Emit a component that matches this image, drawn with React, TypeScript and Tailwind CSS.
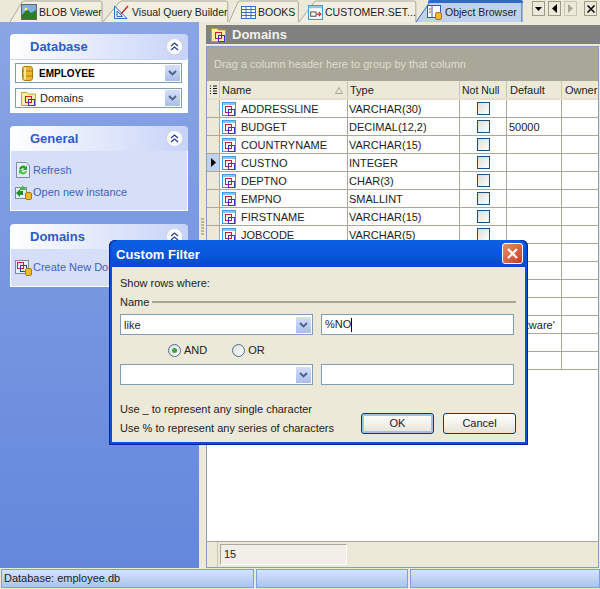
import type { ReactNode } from 'react';

const font = "[font-family:'Liberation_Sans',Tahoma,sans-serif]";

// rows 8 and up sit behind the dialog, only the tail of the default value shows
const domains = [
  ['ADDRESSLINE', 'VARCHAR(30)', ''],
  ['BUDGET', 'DECIMAL(12,2)', '50000'],
  ['COUNTRYNAME', 'VARCHAR(15)', ''],
  ['CUSTNO', 'INTEGER', ''],
  ['DEPTNO', 'CHAR(3)', ''],
  ['EMPNO', 'SMALLINT', ''],
  ['FIRSTNAME', 'VARCHAR(15)', ''],
  ['JOBCODE', 'VARCHAR(5)', ''],
  ['', '', ''],
  ['', '', ''],
  ['', '', ''],
  ['', '', ''],
  ['', '', "'software'"],
  ['', '', ''],
  ['', '', ''],
];

function Squares({ x = 0, y = 0 }: { x?: number; y?: number }) {
  return (
    <g transform={`translate(${x} ${y})`} fill="none" strokeWidth="1">
      <rect x="0.5" y="0.5" width="6" height="6" stroke="#c8203c" />
      <rect x="3.5" y="3.5" width="6" height="6" stroke="#3a35c8" />
    </g>
  );
}

function DomainIcon() {
  return (
    <svg width="14" height="14" viewBox="0 0 14 14" className="shrink-0">
      <rect x="0.5" y="0.5" width="13" height="13" fill="#fff" stroke="#3f9be0" />
      <rect x="1" y="1" width="12" height="2" fill="#8cc6ef" />
      <Squares x={3} y={4} />
    </svg>
  );
}

function FolderIcon() {
  return (
    <svg width="16" height="15" viewBox="0 0 16 15" className="shrink-0">
      <path d="M0.5 3.5V1.5H6L7.5 3H14.5V14.5H0.5Z" fill="#fbeea6" stroke="#c9a227" />
      <Squares x={4} y={5} />
    </svg>
  );
}

function DbIcon() {
  return (
    <svg width="11" height="15" viewBox="0 0 11 15" className="shrink-0">
      <rect x="0.5" y="0.5" width="10" height="14" rx="2.5" fill="#eeb92e" stroke="#a67c12" />
      <path d="M1 5H10M1 10H10" stroke="#a67c12" />
      <rect x="2" y="1.5" width="2" height="12" fill="#fbe88c" />
    </svg>
  );
}

function Chevrons() {
  return (
    <span className="relative w-[17px] h-[17px] rounded-full bg-white border border-[#c6d2f0] flex items-center justify-center">
      <svg width="9" height="9" viewBox="0 0 9 9" fill="none" stroke="#21409a" strokeWidth="1.3">
        <path d="M1 4L4.5 1L8 4M1 8L4.5 5L8 8" />
      </svg>
    </span>
  );
}

function ComboArrow() {
  return (
    <span className="w-[15px] h-[16px] mr-px bg-gradient-to-b from-[#d5dff8] to-[#a9bdee] flex items-center justify-center">
      <svg width="9" height="6" viewBox="0 0 9 6" fill="none" stroke="#4d6185" strokeWidth="1.8">
        <path d="M1 1L4.5 4.5L8 1" />
      </svg>
    </span>
  );
}

function Combo({ children, className }: { children?: ReactNode; className: string }) {
  return (
    <div className={`bg-white border border-[#7f9db9] flex items-center justify-between ${className}`}>
      <div className="flex items-center min-w-0">{children}</div>
      <ComboArrow />
    </div>
  );
}

function Panel({ title, tall, children }: { title: string; tall?: boolean; children: ReactNode }) {
  return (
    <div className="w-[178px]">
      <div className="h-[25px] rounded-t-[4px] bg-gradient-to-r from-white to-[#c7d3f7] flex items-center justify-between pl-5 pr-[5px]">
        <span className="text-[13px] font-bold text-[#2f5bc8]">{title}</span>
        <Chevrons />
      </div>
      <div className={`border border-t-0 border-white ${tall ? 'bg-white' : 'bg-[#d6dff7]'}`}>{children}</div>
    </div>
  );
}

function TaskIcon({ kind }: { kind: 'refresh' | 'open' | 'create' }) {
  if (kind === 'refresh') {
    return (
      <svg width="14" height="16" viewBox="0 0 14 16">
        <path d="M0.5 0.5H10L13.5 4V15.5H0.5Z" fill="#e8eef8" stroke="#7b8aa5" />
        <path d="M3 7A4 4 0 0 1 10 5L11 3V8H6.5L8.5 7A2.5 2.5 0 0 0 4.5 8Z" fill="#2ca02c" />
        <path d="M11 9A4 4 0 0 1 4 11L3 13V8H7.5L5.5 9.5A2.5 2.5 0 0 0 9.5 9Z" fill="#4fc04f" />
      </svg>
    );
  }
  if (kind === 'open') {
    return (
      <svg width="17" height="16" viewBox="0 0 17 16">
        <rect x="0.5" y="3.5" width="11" height="11" fill="#e8eef8" stroke="#7b8aa5" />
        <path d="M1 9L5 5V7H8V11H5V13Z" fill="#1f8f2c" />
        <path d="M11 5L7 1V3H5V6H11Z" fill="#46b84c" />
        <rect x="10.5" y="8.5" width="6" height="7" rx="1.5" fill="#eeb92e" stroke="#a67c12" />
      </svg>
    );
  }
  return (
    <svg width="17" height="16" viewBox="0 0 17 16">
      <rect x="0.5" y="0.5" width="13" height="13" fill="#e8eef8" stroke="#7b8aa5" />
      <Squares x={2} y={2} />
      <rect x="10.5" y="8.5" width="6" height="7" rx="1.5" fill="#eeb92e" stroke="#a67c12" />
    </svg>
  );
}

function TabShape({ active }: { active?: boolean }) {
  return (
    <svg className="absolute inset-0 w-full h-full" preserveAspectRatio="none" viewBox="0 0 100 22">
      <path
        d="M0 22L13 2Q14 1 16 1H97Q99 1 99 3V22"
        fill={active ? '#c1d2ee' : '#f1efe2'}
        stroke={active ? '#316ac5' : '#aca899'}
        vectorEffect="non-scaling-stroke"
      />
    </svg>
  );
}

function Tab({ label, icon, className, pad, active }: { label: string; icon: ReactNode; className: string; pad: string; active?: boolean }) {
  return (
    <div className={`relative h-[22px] shrink-0 ${className}`}>
      <TabShape active={active} />
      {active && <div className="absolute top-0 left-[12px] right-0 h-[3px] bg-[#316ac5] rounded-t-[2px]" />}
      <div className={`relative h-full flex items-center gap-[2px] pt-[2px] whitespace-nowrap text-[10.5px] ${pad}`}>
        {icon}
        <span className="text-[#222]">{label}</span>
      </div>
    </div>
  );
}

function TabNavButton({ children, dim }: { children: ReactNode; dim?: boolean }) {
  return (
    <div className={`w-[13px] h-[15px] border flex items-center justify-center ${dim ? 'border-[#c8c5b2]' : 'border-[#9d9a88]'}`}>
      {children}
    </div>
  );
}

function TabBar() {
  return (
    <div className="h-[22px] bg-[#ece9d8] flex items-start shrink-0 relative">
      <Tab
        className="w-[93px] ml-[10px]"
        pad="pl-[11px]"
        label="BLOB Viewer"
        icon={
          <svg width="16" height="16" viewBox="0 0 16 16" className="shrink-0">
            <rect x="0.5" y="0.5" width="15" height="15" fill="#7fb0e0" stroke="#666" />
            <path d="M1 11L6 5L10 9L15 6V15H1Z" fill="#2d7a2a" />
            <circle cx="5" cy="5" r="1.5" fill="#fff27a" />
          </svg>
        }
      />
      <Tab
        className="w-[126px]"
        pad="pl-[10px]"
        label="Visual Query Builder"
        icon={
          <svg width="17" height="16" viewBox="0 0 17 16" className="shrink-0" fill="none">
            <path d="M1.5 14.5V2L14 14.5Z" stroke="#2f6bd0" />
            <path d="M4 12.5V7L9.5 12.5Z" stroke="#2f6bd0" />
            <path d="M8 10L15 2" stroke="#c03030" strokeWidth="1.5" />
          </svg>
        }
      />
      <Tab
        className="w-[70px]"
        pad="pl-[12px]"
        label="BOOKS"
        icon={
          <svg width="15" height="13" viewBox="0 0 15 13" className="shrink-0" fill="#fff" stroke="#3b6fc0">
            <rect x="0.5" y="0.5" width="14" height="12" />
            <path d="M0.5 3.5H14.5M0.5 6.5H14.5M0.5 9.5H14.5M5 0.5V12.5M10 0.5V12.5" />
          </svg>
        }
      />
      <Tab
        className="w-[118px]"
        pad="pl-[9px]"
        label="CUSTOMER.SET..."
        icon={
          <svg width="15" height="15" viewBox="0 0 14 14" className="shrink-0">
            <rect x="0.5" y="0.5" width="13" height="13" fill="#fff" stroke="#3f9be0" />
            <rect x="1" y="1" width="12" height="2" fill="#8cc6ef" />
            <rect x="2.5" y="6.5" width="5" height="4" fill="none" stroke="#555" />
            <path d="M8 8.5H12M10 6.5L12 8.5L10 10.5" fill="none" stroke="#d02040" />
          </svg>
        }
      />
      <Tab
        active
        className="w-[107px] -ml-[1px]"
        pad="pl-[11px]"
        label="Object Browser"
        icon={
          <svg width="15" height="15" viewBox="0 0 15 15" className="shrink-0 mr-px">
            <rect x="0.5" y="0.5" width="13" height="12" fill="#fff" stroke="#2f5bc8" />
            <path d="M5 1V12" stroke="#2f5bc8" />
            <path d="M2 4H4M2 7H4" stroke="#c03030" />
            <rect x="8.5" y="7.5" width="6" height="7" rx="1.5" fill="#eeb92e" stroke="#a67c12" />
          </svg>
        }
      />
      <div className="flex items-center ml-[9px] mt-[1px] gap-[3px]">
        <TabNavButton>
          <svg width="7" height="4" viewBox="0 0 7 4"><path d="M0 0H7L3.5 4Z" fill="#000" /></svg>
        </TabNavButton>
        <TabNavButton>
          <svg width="5" height="9" viewBox="0 0 5 9"><path d="M5 0V9L0 4.5Z" fill="#000" /></svg>
        </TabNavButton>
        <TabNavButton dim>
          <svg width="5" height="9" viewBox="0 0 5 9"><path d="M0 0V9L5 4.5Z" fill="#a8a595" /></svg>
        </TabNavButton>
        <div className="ml-[4px]">
          <TabNavButton>
            <svg width="8" height="8" viewBox="0 0 8 8" stroke="#000" strokeWidth="1.5"><path d="M0.5 0.5L7.5 7.5M7.5 0.5L0.5 7.5" /></svg>
          </TabNavButton>
        </div>
      </div>
    </div>
  );
}

function Sidebar() {
  return (
    <div className="w-[199px] shrink-0 bg-gradient-to-b from-[#8aa5e4] to-[#6487dc] pt-3 pl-[10px] flex flex-col gap-[13px]">
      <Panel title="Database" tall>
        <div className="px-[4px] pt-[3px] pb-[4px] flex flex-col gap-[5px] border-t border-[#c7d3f7]">
          <Combo className="w-[167px] h-5">
            <span className="ml-[6px]"><DbIcon /></span>
            <span className="ml-[6px] pt-px font-bold text-[10px] text-black">EMPLOYEE</span>
          </Combo>
          <Combo className="w-[167px] h-5">
            <span className="ml-[5px]"><FolderIcon /></span>
            <span className="ml-[3px] text-[#222]">Domains</span>
          </Combo>
        </div>
      </Panel>
      <Panel title="General">
        <div className="pt-[10px] pb-[9px] pl-[3px] flex flex-col gap-[4px] text-[#3f62c4]">
          <div className="h-[18px] flex items-center gap-px">
            <span className="w-[18px] flex justify-center"><TaskIcon kind="refresh" /></span>
            Refresh
          </div>
          <div className="h-[18px] flex items-center gap-px">
            <span className="w-[18px] flex justify-center"><TaskIcon kind="open" /></span>
            Open new instance
          </div>
        </div>
      </Panel>
      <Panel title="Domains">
        <div className="pl-[3px] text-[#3f62c4] flex items-center gap-px whitespace-nowrap h-[37px]">
          <span className="w-[18px] flex justify-center"><TaskIcon kind="create" /></span>
          Create New Domain
        </div>
      </Panel>
    </div>
  );
}

function Splitter() {
  return (
    <div className="w-[7px] shrink-0 bg-[#ece9d8] flex flex-col items-center">
      <div className="h-[196px]" />
      <div className="flex flex-col gap-px">
        {Array.from({ length: 6 }).map((_, i) => (
          <span key={i} className="w-[3px] h-[2px] bg-[#b9b6a2]" />
        ))}
      </div>
    </div>
  );
}

function HeaderCell({ className, children }: { className: string; children: ReactNode }) {
  return (
    <div className={`h-full flex items-center pt-px border-r border-[#c8c5b2] whitespace-nowrap overflow-hidden ${className}`}>
      {children}
    </div>
  );
}

function Grid() {
  return (
    <div className="flex-1 min-h-0 flex flex-col border border-[#84a0bd] mr-px bg-white">
      <div className="h-[34px] shrink-0 bg-[#a9a797] flex items-center pl-[7px] text-[#dfddd0]">
        Drag a column header here to group by that column
      </div>
      <div className="h-[19px] shrink-0 bg-[#ece9d8] border-b-2 border-[#e2dfcd] flex items-center text-[#222]">
        <div className="w-[13px] h-full flex items-center justify-center border-r border-[#c8c5b2]">
          <svg width="7" height="9" viewBox="0 0 7 9" stroke="#111">
            <path d="M0 1H1M3 1H7M0 3.5H1M3 3.5H7M0 6H1M3 6H7M0 8.5H1M3 8.5H7" />
          </svg>
        </div>
        <HeaderCell className="w-[128px] justify-between pl-[2px] pr-[4px]">
          Name
          <svg width="8" height="7" viewBox="0 0 8 7" fill="none" stroke="#aca899"><path d="M4 0.5L7.5 6.5H0.5Z" /></svg>
        </HeaderCell>
        <HeaderCell className="w-[112px] pl-[2px]">Type</HeaderCell>
        <HeaderCell className="w-[47px] pl-[2px] text-[10.5px]">Not Null</HeaderCell>
        <HeaderCell className="w-[55px] pl-[3px]">Default</HeaderCell>
        <div className="pl-[3px] pt-px">Owner</div>
      </div>
      <div>
        {domains.map(([name, type, def], i) => (
          <div key={i} className="h-[18px] flex border-b border-[#aca899] text-[#222]">
            <div className={`w-[13px] border-r border-[#aca899] flex items-center justify-center ${i === 3 ? 'bg-[#c1d2ee]' : 'bg-[#ece9d8]'}`}>
              {i === 3 && <svg width="5" height="9" viewBox="0 0 5 9"><path d="M0 0V9L5 4.5Z" fill="#000" /></svg>}
            </div>
            <div className="w-[128px] border-r border-[#aca899] flex items-center pl-[2px] gap-[5px] whitespace-nowrap">
              {name && <DomainIcon />}
              <span className="pt-px">{name}</span>
            </div>
            <div className="w-[112px] border-r border-[#aca899] flex items-center pl-px pt-px">{type}</div>
            <div className="w-[47px] border-r border-[#aca899] flex items-center justify-center">
              {name && <span className="w-[13px] h-[13px] border border-[#1c5180] bg-gradient-to-br from-[#dcdcd7] to-white" />}
            </div>
            <div className="w-[55px] border-r border-[#aca899] flex items-center pl-[2px] pt-px">{def}</div>
            <div className="flex-1" />
          </div>
        ))}
      </div>
      <div className="flex-1" />
      <div className="h-[26px] shrink-0 bg-[#ece9d8] border-t border-[#aca899] flex items-center">
        <div className="w-[11px] h-full border-r border-[#c8c5b2]" />
        <div className="ml-[2px] w-[127px] h-[21px] bg-[#f1efe7] border border-[#aca899] border-r-white border-b-white flex items-center pl-[3px] text-[#222]">
          15
        </div>
      </div>
    </div>
  );
}

function ContentPane() {
  return (
    <div className="flex-1 min-w-0 flex flex-col bg-[#ece9d8] pt-[3px]">
      <div className="h-[19px] shrink-0 bg-[#808080] flex items-center pl-[5px] gap-[5px] mb-[2px]">
        <FolderIcon />
        <span className="text-[13px] font-bold text-[#f2f0ea]">Domains</span>
      </div>
      <Grid />
    </div>
  );
}

function StatusBar() {
  const cell = 'h-[19px] border border-[#7d9fe0] bg-gradient-to-b from-[#d5e4fa] to-[#a9c4ee]';
  return (
    <div className="h-[21px] shrink-0 bg-[#ece9d8] pt-[1px] flex gap-[2px] pl-px text-[#222]">
      <div className={`${cell} w-[253px] pl-[2px] flex items-center`}>Database: employee.db</div>
      <div className={`${cell} w-[152px]`} />
      <div className={`${cell} flex-1`} />
    </div>
  );
}

function DialogButton({ label, primary }: { label: string; primary?: boolean }) {
  return (
    <button
      className={`w-[73px] h-[21px] rounded-[3px] border border-[#003c74] bg-gradient-to-b from-white to-[#e6e3d6] text-[#222] ${
        primary ? 'shadow-[inset_0_0_0_2px_#a6bfe8]' : ''
      }`}
    >
      {label}
    </button>
  );
}

function Radio({ label, checked }: { label: string; checked?: boolean }) {
  return (
    <div className="flex items-center gap-[3px]">
      <span className="w-[13px] h-[13px] rounded-full border border-[#4a6d92] bg-gradient-to-br from-[#dcdcd7] to-white flex items-center justify-center">
        {checked && <span className="w-[5px] h-[5px] rounded-full bg-[#3fa53f]" />}
      </span>
      {label}
    </div>
  );
}

function CustomFilter() {
  return (
    <div className="absolute left-[109px] top-[240px] w-[419px] h-[205px] rounded-t-[6px] bg-[#0a50d8] p-[3px] pt-0 flex flex-col text-[#222] shadow-[inset_0_0_0_1px_#00249c]">
      <div className="h-[27px] shrink-0 flex items-center justify-between pl-[4px] pr-[2px] rounded-t-[6px] bg-gradient-to-b from-[#0a5fe0] via-[#0a58dc] to-[#0348c8]">
        <span className="text-[13px] font-bold text-white pt-px">Custom Filter</span>
        <div className="w-[21px] h-[21px] rounded-[3px] border border-white bg-gradient-to-br from-[#e88c6c] to-[#c83c18] flex items-center justify-center">
          <svg width="11" height="11" viewBox="0 0 11 11" stroke="#fff" strokeWidth="2.2"><path d="M1 1L10 10M10 1L1 10" /></svg>
        </div>
      </div>
      <div className="flex-1 bg-[#ece9d8] pt-[8px] px-[8px]">
        <div className="h-[16px] flex items-center">Show rows where:</div>
        <div className="h-[16px] mt-[3px] flex items-center gap-[3px]">
          Name
          <div className="flex-1 h-[2px] bg-[#a8a797] mr-[1px]" />
        </div>
        <div className="flex gap-[8px] mt-[4px]">
          <Combo className="w-[193px] h-[21px]"><span className="ml-[3px] pt-px">like</span></Combo>
          <div className="w-[193px] h-[21px] bg-white border border-[#7f9db9] pl-[3px] flex items-center">
            %NO<span className="w-px h-[14px] bg-black" />
          </div>
        </div>
        <div className="h-[29px] flex items-center pl-[48px] gap-[25px] pt-px">
          <Radio label="AND" checked />
          <Radio label="OR" />
        </div>
        <div className="flex gap-[8px]">
          <Combo className="w-[193px] h-[21px]" />
          <div className="w-[193px] h-[21px] bg-white border border-[#7f9db9]" />
        </div>
        <div className="flex justify-between mt-[15px]">
          <div className="flex flex-col gap-[3px] pt-px">
            <div className="h-[16px] flex items-center">Use _ to represent any single character</div>
            <div className="h-[16px] flex items-center">Use % to represent any series of characters</div>
          </div>
          <div className="flex gap-[9px] pt-[13px] mr-[1px]">
            <DialogButton label="OK" primary />
            <DialogButton label="Cancel" />
          </div>
        </div>
      </div>
    </div>
  );
}

export default function App() {
  return (
    <div className={`relative w-[600px] h-[589px] overflow-hidden flex flex-col bg-[#ece9d8] text-[11px] leading-none ${font}`}>
      <TabBar />
      <div className="flex-1 min-h-0 flex">
        <Sidebar />
        <Splitter />
        <ContentPane />
      </div>
      <StatusBar />
      <CustomFilter />
    </div>
  );
}
